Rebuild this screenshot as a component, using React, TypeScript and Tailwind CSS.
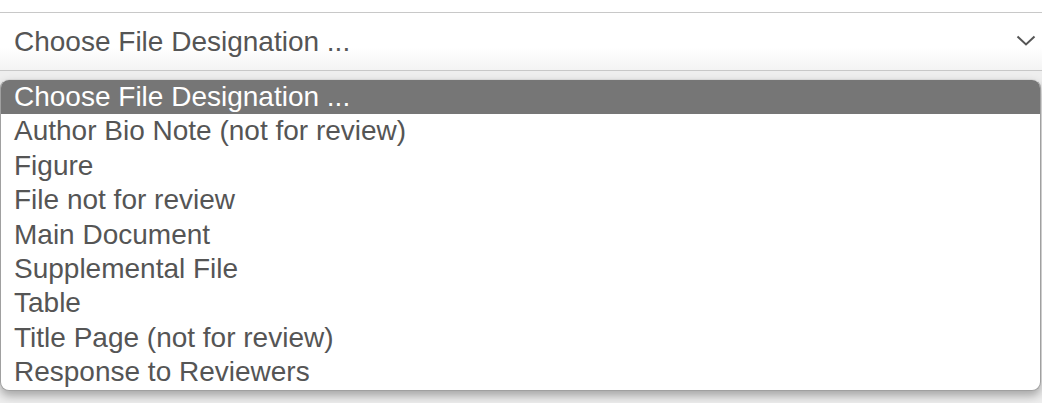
import React from 'react';

const options = [
  'Choose File Designation ...',
  'Author Bio Note (not for review)',
  'Figure',
  'File not for review',
  'Main Document',
  'Supplemental File',
  'Table',
  'Title Page (not for review)',
  'Response to Reviewers',
];

const App: React.FC = () => {
  const selected = 0;

  return (
    <div className="w-[1042px] h-[403px] overflow-hidden bg-white font-['Liberation_Sans',Arial,sans-serif]">
      <div className="h-[12px]" />

      {/* select box */}
      <div className="h-[59px] border-y border-[#c8c8c8] bg-gradient-to-b from-white from-60% to-[#f4f4f4] flex items-center justify-between pl-[14px] pr-[6px]">
        <span className="text-[28px] leading-none text-[#555]">Choose File Designation ...</span>
        <svg width="20" height="12" viewBox="0 0 20 12" className="mb-[1px]">
          <path d="M1.5 1.5 L10 9.5 L18.5 1.5" fill="none" stroke="#555" strokeWidth="2" />
        </svg>
      </div>

      {/* open option list */}
      <div className="bg-[#eeeeee] h-[332px] pt-[8px] pr-[1px]">
        <ul className="rounded-[9px] border border-[#a0a0a0] border-t-[#d8d8d8] bg-white overflow-hidden shadow-[0_5px_10px_rgba(0,0,0,0.3)]">
          {options.map((opt, i) => (
            <li
              key={opt}
              className={`h-[34.4px] leading-[34.4px] text-[28px] pl-[13px] whitespace-nowrap ${
                i === selected ? 'bg-[#767676] text-white' : 'text-[#555]'
              }`}
            >
              {opt}
            </li>
          ))}
        </ul>
      </div>
    </div>
  );
};

export default App;
